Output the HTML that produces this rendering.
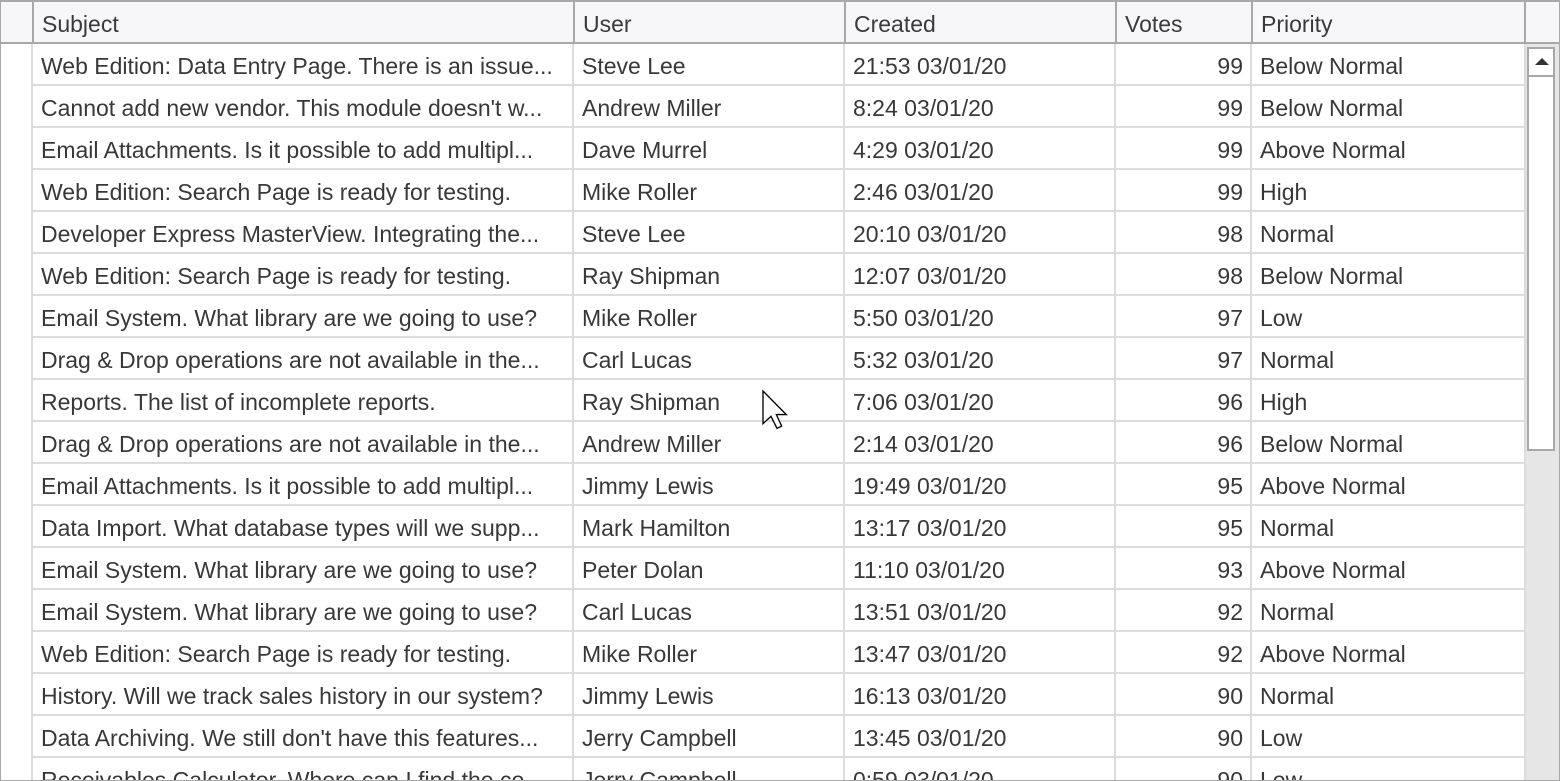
<!DOCTYPE html>
<html><head><style>
body{margin:0;width:1560px;height:780px;overflow:hidden;background:#fff;font-family:"Segoe UI","Liberation Sans",sans-serif;}
#g{position:absolute;left:0;top:0;width:1558px;height:778px;border:1px solid #a8a8a8;border-top:2px solid #a8a8a8;overflow:hidden;background:#fff}
.hd{position:absolute;top:0;height:40px;background:#f7f7fa;border-bottom:2px solid #a8a8a8;}
.hc{position:absolute;top:0;height:40px;border-left:2px solid #a8a8a8;box-sizing:border-box;padding-left:8px;font-size:23px;line-height:45px;color:#3a3a3a;}
.r{position:absolute;left:32px;width:1493px;height:42px;}
.c{position:absolute;top:0;height:42px;box-sizing:border-box;border-left:2px solid #dcdcdc;border-bottom:2px solid #dcdcdc;font-size:23px;line-height:45px;color:#383838;padding-left:8px;white-space:nowrap;overflow:hidden}
.n{text-align:right;padding-right:9px;padding-left:0}
</style></head><body>
<div id="g">
<div class="hd" style="left:0;width:1558px"></div>
<div class="hc" style="left:31px;width:543px">Subject</div>
<div class="hc" style="left:572px;width:273px">User</div>
<div class="hc" style="left:843px;width:273px">Created</div>
<div class="hc" style="left:1114px;width:138px">Votes</div>
<div class="hc" style="left:1250px;width:275px">Priority</div>
<div class="hc" style="left:1523px;width:35px"></div>
<div style="position:absolute;left:30px;top:42px;width:2px;height:740px;background:#dcdcdc"></div>
<div id="rows"></div>
<div style="position:absolute;left:1523px;top:42px;width:33px;height:740px;background:#e6e6e6;border-left:2px solid #dcdcdc;border-right:1px solid #a8a8a8"></div>
<div style="position:absolute;left:1526px;top:45px;width:28px;height:404px;box-sizing:border-box;border:2px solid #a8a8a8;background:#fff"></div>
<div style="position:absolute;left:1526px;top:45px;width:28px;height:30px;box-sizing:border-box;border:2px solid #a8a8a8;background:#fff"></div>
<div style="position:absolute;left:1534px;top:56px;width:0;height:0;border-left:7px solid transparent;border-right:7px solid transparent;border-bottom:7px solid #333"></div>
</div>
<svg style="position:absolute;left:761px;top:389px" width="40" height="50" viewBox="0 0 30 37.5"><path d="M1.5 1.5 L1.5 26 L7.5 20.5 L12 29.5 L15.5 27.8 L11.5 19.2 L19 19.2 Z" fill="#fff" stroke="#000" stroke-width="1" stroke-linejoin="miter"/></svg>
<script>
const d=[["Web Edition: Data Entry Page. There is an issue...","Steve Lee","21:53 03/01/20","99","Below Normal"],
["Cannot add new vendor. This module doesn't w...","Andrew Miller","8:24 03/01/20","99","Below Normal"],
["Email Attachments. Is it possible to add multipl...","Dave Murrel","4:29 03/01/20","99","Above Normal"],
["Web Edition: Search Page is ready for testing.","Mike Roller","2:46 03/01/20","99","High"],
["Developer Express MasterView. Integrating the...","Steve Lee","20:10 03/01/20","98","Normal"],
["Web Edition: Search Page is ready for testing.","Ray Shipman","12:07 03/01/20","98","Below Normal"],
["Email System. What library are we going to use?","Mike Roller","5:50 03/01/20","97","Low"],
["Drag & Drop operations are not available in the...","Carl Lucas","5:32 03/01/20","97","Normal"],
["Reports. The list of incomplete reports.","Ray Shipman","7:06 03/01/20","96","High"],
["Drag & Drop operations are not available in the...","Andrew Miller","2:14 03/01/20","96","Below Normal"],
["Email Attachments. Is it possible to add multipl...","Jimmy Lewis","19:49 03/01/20","95","Above Normal"],
["Data Import. What database types will we supp...","Mark Hamilton","13:17 03/01/20","95","Normal"],
["Email System. What library are we going to use?","Peter Dolan","11:10 03/01/20","93","Above Normal"],
["Email System. What library are we going to use?","Carl Lucas","13:51 03/01/20","92","Normal"],
["Web Edition: Search Page is ready for testing.","Mike Roller","13:47 03/01/20","92","Above Normal"],
["History. Will we track sales history in our system?","Jimmy Lewis","16:13 03/01/20","90","Normal"],
["Data Archiving. We still don't have this features...","Jerry Campbell","13:45 03/01/20","90","Low"],
["Receivables Calculator. Where can I find the co...","Jerry Campbell","0:59 03/01/20","90","Low"]];
const w=[[0,542],[541,273],[812,273],[1083,138],[1219,274]];
let h="";
d.forEach((r,i)=>{h+=`<div class="r" style="left:-1px;top:${42+i*42}px">`;
r.forEach((t,j)=>{h+=`<div class="c${j==3?' n':''}" style="left:${w[j][0]+31}px;width:${w[j][1]}px">${t.replace('&','&amp;')}</div>`});
h+="</div>"});
document.getElementById("rows").innerHTML=h;
</script>
</body></html>
